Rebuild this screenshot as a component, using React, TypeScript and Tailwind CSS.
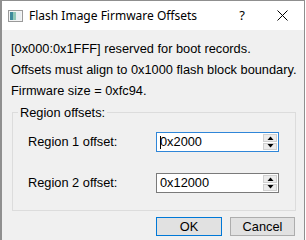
import React from 'react';

const body = { fontFamily: '"Liberation Sans", Arial, sans-serif' };

function Arrow({ up }: { up?: boolean }) {
  return (
    <svg width="7" height="4" viewBox="0 0 7 4">
      {up ? <path d="M0.5 4 L3.5 0.5 L6.5 4 Z" fill="#000" /> : <path d="M0.5 0 L3.5 3.5 L6.5 0 Z" fill="#000" />}
    </svg>
  );
}

function SpinBox({ value, focused }: { value: string; focused?: boolean }) {
  return (
    <div
      className={`flex h-[20px] w-[123px] border bg-white ${focused ? 'border-[#2f86d8]' : 'border-[#7a7a7a]'}`}
    >
      <div className="flex flex-1 items-center pl-[3px] text-[12.8px] leading-none text-black">
        {focused && <span className="mr-[-1px] h-[13px] w-px bg-black" />}
        {value}
      </div>
      <div className="flex w-[15px] flex-col gap-px py-px pr-px">
        <div className="flex flex-1 items-center justify-center border border-[#d0d0d0] bg-[#ececec]">
          <Arrow up />
        </div>
        <div className="flex flex-1 items-center justify-center border border-[#d0d0d0] bg-[#ececec]">
          <Arrow />
        </div>
      </div>
    </div>
  );
}

export default function App() {
  return (
    <div className="h-[240px] w-[306px] overflow-hidden bg-white" style={body}>
      <div className="flex h-[240px] w-[305px] flex-col border-l-2 border-r border-t border-[#8f8f8f] bg-[#f0f0f0]">
        {/* Title bar */}
        <div className="flex h-[29px] items-center bg-white">
          <svg className="ml-[6px]" width="15" height="12" viewBox="0 0 15 12">
            <rect x="0.5" y="0.5" width="14" height="11" fill="#f4f4f4" stroke="#9a9a9a" />
            <rect x="2" y="2" width="3" height="8" fill="#3d8a9c" />
            <rect x="5" y="2" width="3" height="8" fill="#8fc7b8" />
            <rect x="8" y="2" width="5" height="8" fill="#e8eef2" />
          </svg>
          <span
            className="ml-[6px] text-[12px] text-black"
            style={{ fontFamily: '"Noto Sans", "Open Sans", sans-serif' }}
          >
            Flash Image Firmware Offsets
          </span>
          <span className="ml-auto text-[13px] text-black" style={{ fontFamily: '"Noto Sans", sans-serif' }}>
            ?
          </span>
          <svg className="ml-[32px] mr-[16px]" width="11" height="11" viewBox="0 0 11 11">
            <path d="M0.5 0.5 L10.5 10.5 M10.5 0.5 L0.5 10.5" stroke="#000" strokeWidth="1" />
          </svg>
        </div>

        {/* Body */}
        <div className="pl-[9px] pt-[8px] text-[12.8px] leading-[21px] text-black">
          <div>[0x000:0x1FFF] reserved for boot records.</div>
          <div>Offsets must align to 0x1000 flash block boundary.</div>
          <div>Firmware size = 0xfc94.</div>
        </div>

        <fieldset className="ml-[10px] mt-[4px] w-[284px] border border-[#dcdcdc] pb-[17px]">
          <legend className="ml-[5px] px-[2px] text-[12.8px] leading-[15px] text-black">Region offsets:</legend>
          <div className="flex flex-col gap-[21px] pl-[15px] pt-[12px]">
            <div className="flex items-center">
              <span className="w-[128px] text-[12.8px] text-black">Region 1 offset:</span>
              <SpinBox value="0x2000" focused />
            </div>
            <div className="flex items-center">
              <span className="w-[128px] text-[12.8px] text-black">Region 2 offset:</span>
              <SpinBox value="0x12000" />
            </div>
          </div>
        </fieldset>

        <div className="mt-[6px] flex gap-[8px] pl-[154px]">
          <button className="flex h-[19px] w-[66px] items-center justify-center border border-[#0078d7] bg-[#e1e1e1] text-[12.8px] text-black">
            OK
          </button>
          <button className="flex h-[19px] w-[65px] items-center justify-center border border-[#adadad] bg-[#e1e1e1] text-[12.8px] text-black">
            Cancel
          </button>
        </div>
      </div>
    </div>
  );
}
